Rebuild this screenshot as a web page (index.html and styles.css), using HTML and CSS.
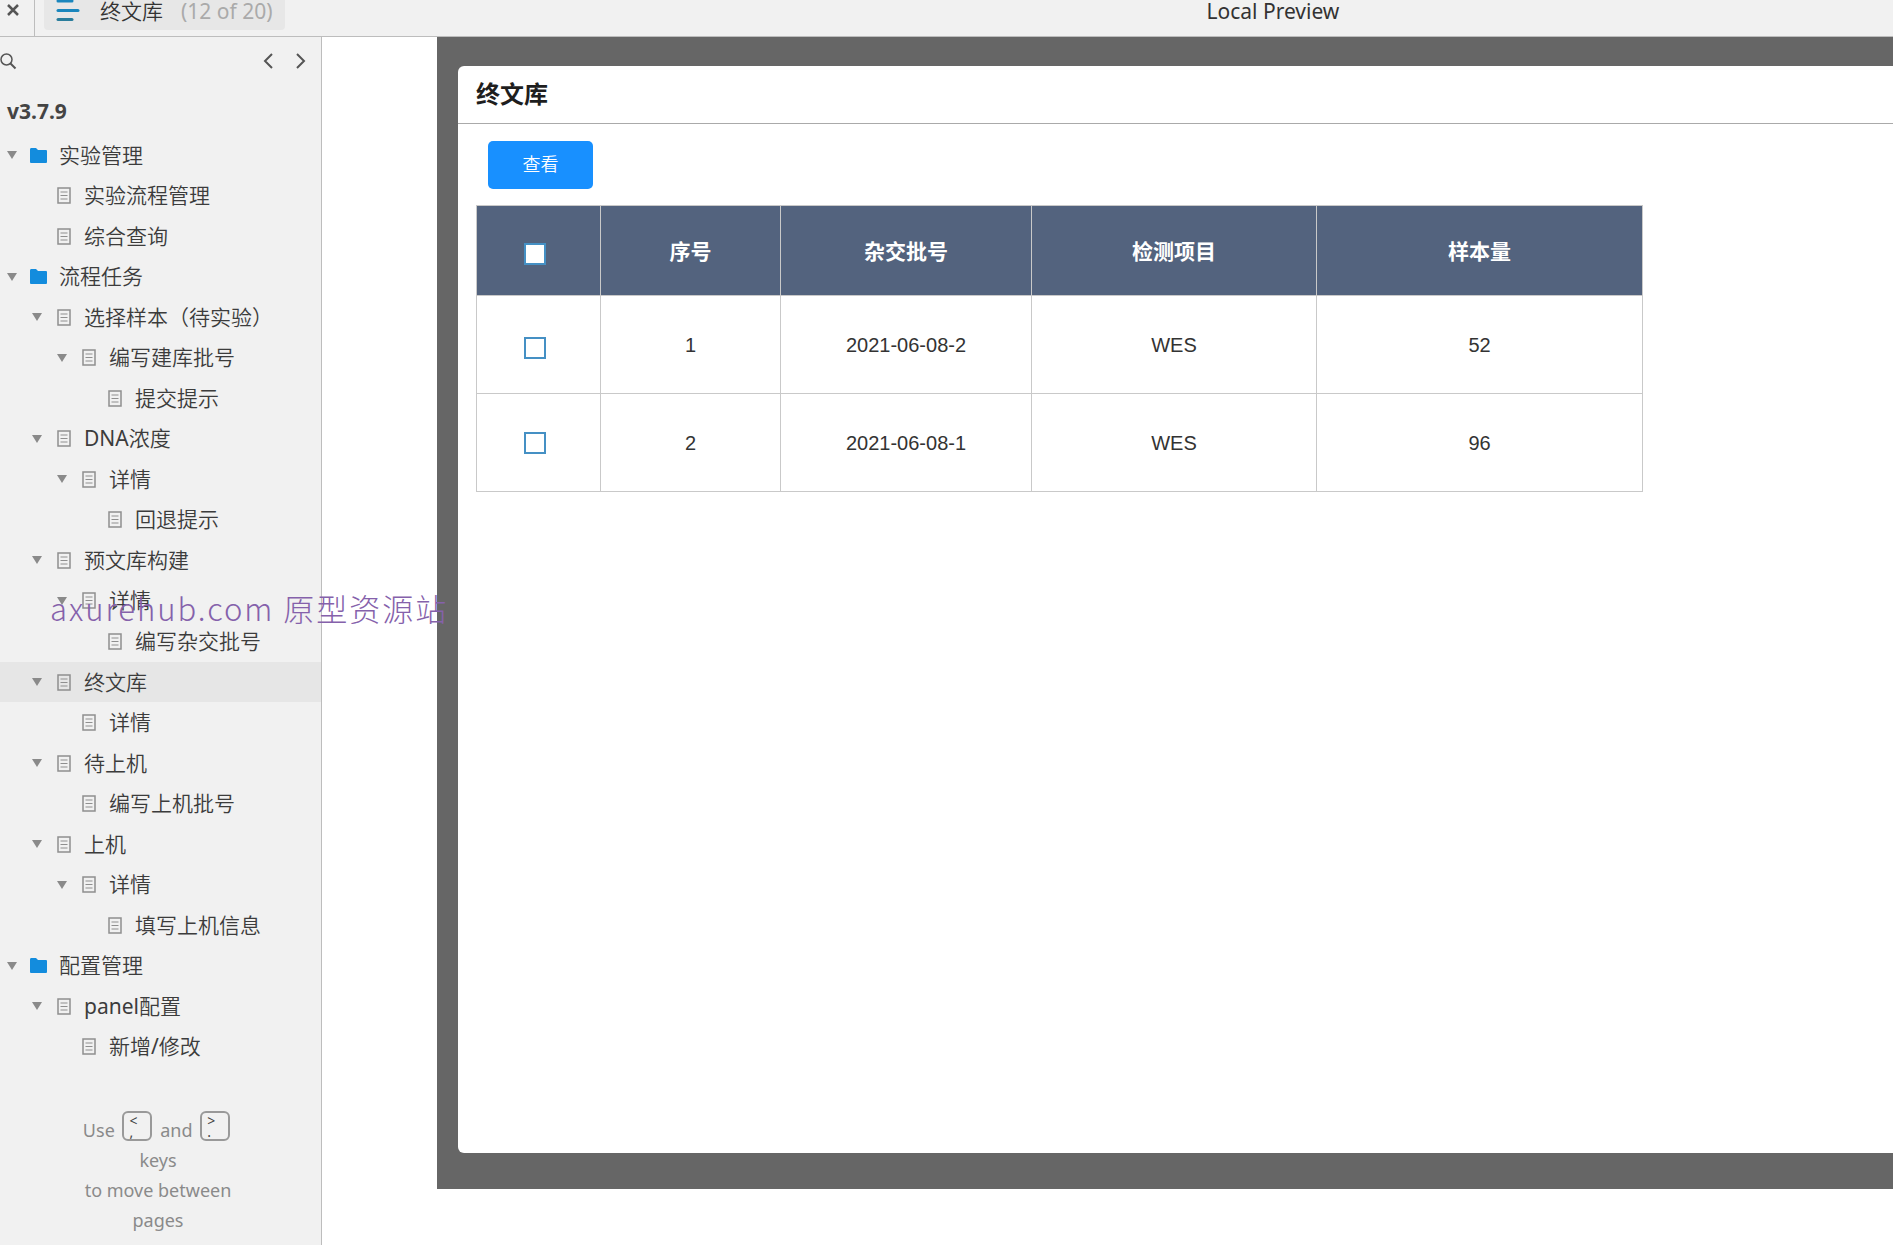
FILE: index.html
```html
<!DOCTYPE html>
<html lang="zh-CN">
<head>
<meta charset="utf-8">
<meta name="viewport" content="width=device-width, initial-scale=1">
<title>终文库</title>
<link rel="stylesheet" href="styles.css">
</head>
<body>
<svg width="0" height="0" class="sprite" aria-hidden="true">
  <symbol id="page" viewBox="0 0 14 17"><path d="M1 1h12v15H1z" fill="none" stroke="#8f8f8f" stroke-width="1.5"/><path d="M3.5 5h7M3.5 8.500h7M3.500 12h7" stroke="#8f8f8f" stroke-width="1.200"/></symbol>
  <symbol id="folder" viewBox="0 0 17 15"><path d="M0 1.500Q0 0 1 0h5l2 2h8q1 0 1 1v11q0 1-1 1H1q-1 0-1-1z" fill="#138cdd"/></symbol>
  <symbol id="arrow" viewBox="0 0 10 8"><path d="M0 0h10L5 8z" fill="#8a8a8a"/></symbol>
</svg>

<header class="topbar">
  <button class="close" aria-label="关闭"><svg width="12" height="12" viewBox="0 0 12 12"><path d="M1 1l10 10M11 1L1 11" stroke="#555" stroke-width="2.500"/></svg></button>
  <button class="tab">
    <svg width="24" height="22" viewBox="0 0 24 22"><g stroke-width="3" stroke-linecap="round"><path d="M2 1h14" stroke="#1a86bd"/><path d="M2 10.500h20" stroke="#1a86bd"/><path d="M2 19.500h14" stroke="#2a7d9c"/></g></svg>
    <span class="tab-name">终文库</span>
    <span class="tab-count">(12 of 20)</span>
  </button>
  <span class="preview">Local Preview</span>
</header>

<div class="body">
  <aside class="sidebar">
    <div class="tools">
      <button aria-label="搜索"><svg width="17" height="17" viewBox="0 0 17 17"><circle cx="6.500" cy="6.500" r="5.500" fill="none" stroke="#555" stroke-width="1.500"/><path d="M10.500 10.500l5 5" stroke="#555" stroke-width="2"/></svg></button>
      <button class="prev" aria-label="上一页"><svg width="10" height="16" viewBox="0 0 10 16"><path d="M9 1L2 8l7 7" fill="none" stroke="#555" stroke-width="2"/></svg></button>
      <button aria-label="下一页"><svg width="10" height="16" viewBox="0 0 10 16"><path d="M1 1l7 7-7 7" fill="none" stroke="#555" stroke-width="2"/></svg></button>
    </div>
    <h1 class="version">v3.7.9</h1>
    <ul class="tree">
      <li><svg class="arrow"><use href="#arrow"/></svg><svg class="folder"><use href="#folder"/></svg><a href="#">实验管理</a></li>
      <li class="l1 leaf"><svg class="page"><use href="#page"/></svg><a href="#">实验流程管理</a></li>
      <li class="l1 leaf"><svg class="page"><use href="#page"/></svg><a href="#">综合查询</a></li>
      <li><svg class="arrow"><use href="#arrow"/></svg><svg class="folder"><use href="#folder"/></svg><a href="#">流程任务</a></li>
      <li class="l1"><svg class="arrow"><use href="#arrow"/></svg><svg class="page"><use href="#page"/></svg><a href="#">选择样本（待实验）</a></li>
      <li class="l2"><svg class="arrow"><use href="#arrow"/></svg><svg class="page"><use href="#page"/></svg><a href="#">编写建库批号</a></li>
      <li class="l3 leaf"><svg class="page"><use href="#page"/></svg><a href="#">提交提示</a></li>
      <li class="l1"><svg class="arrow"><use href="#arrow"/></svg><svg class="page"><use href="#page"/></svg><a href="#"><span class="latin">DNA</span>浓度</a></li>
      <li class="l2"><svg class="arrow"><use href="#arrow"/></svg><svg class="page"><use href="#page"/></svg><a href="#">详情</a></li>
      <li class="l3 leaf"><svg class="page"><use href="#page"/></svg><a href="#">回退提示</a></li>
      <li class="l1"><svg class="arrow"><use href="#arrow"/></svg><svg class="page"><use href="#page"/></svg><a href="#">预文库构建</a></li>
      <li class="l2"><svg class="arrow"><use href="#arrow"/></svg><svg class="page"><use href="#page"/></svg><a href="#">详情</a></li>
      <li class="l3 leaf"><svg class="page"><use href="#page"/></svg><a href="#">编写杂交批号</a></li>
      <li class="l1 current"><svg class="arrow"><use href="#arrow"/></svg><svg class="page"><use href="#page"/></svg><a href="#">终文库</a></li>
      <li class="l2 leaf"><svg class="page"><use href="#page"/></svg><a href="#">详情</a></li>
      <li class="l1"><svg class="arrow"><use href="#arrow"/></svg><svg class="page"><use href="#page"/></svg><a href="#">待上机</a></li>
      <li class="l2 leaf"><svg class="page"><use href="#page"/></svg><a href="#">编写上机批号</a></li>
      <li class="l1"><svg class="arrow"><use href="#arrow"/></svg><svg class="page"><use href="#page"/></svg><a href="#">上机</a></li>
      <li class="l2"><svg class="arrow"><use href="#arrow"/></svg><svg class="page"><use href="#page"/></svg><a href="#">详情</a></li>
      <li class="l3 leaf"><svg class="page"><use href="#page"/></svg><a href="#">填写上机信息</a></li>
      <li><svg class="arrow"><use href="#arrow"/></svg><svg class="folder"><use href="#folder"/></svg><a href="#">配置管理</a></li>
      <li class="l1"><svg class="arrow"><use href="#arrow"/></svg><svg class="page"><use href="#page"/></svg><a href="#"><span class="latin">panel</span>配置</a></li>
      <li class="l2 leaf"><svg class="page"><use href="#page"/></svg><a href="#">新增<span class="latin">/</span>修改</a></li>
    </ul>
    <p class="hint">Use <kbd><span>&lt;</span><span>,</span></kbd> and <kbd><span>&gt;</span><span>.</span></kbd> keys<br>to move between pages</p>
  </aside>

  <main class="stage">
    <section class="card">
      <h2 class="card-title">终文库</h2>
      <div class="card-body">
        <button class="view">查看</button>
        <table class="batches">
          <colgroup><col class="c-tick"><col class="c-no"><col class="c-batch"><col class="c-item"><col class="c-count"></colgroup>
          <thead>
            <tr><th class="tick low"><input type="checkbox" aria-label="全选"></th><th>序号</th><th>杂交批号</th><th>检测项目</th><th>样本量</th></tr>
          </thead>
          <tbody>
            <tr><td class="tick low"><input type="checkbox" aria-label="选择 1"></td><td>1</td><td>2021-06-08-2</td><td>WES</td><td>52</td></tr>
            <tr><td class="tick"><input type="checkbox" aria-label="选择 2"></td><td>2</td><td>2021-06-08-1</td><td>WES</td><td>96</td></tr>
          </tbody>
        </table>
      </div>
    </section>
  </main>
</div>
<div class="watermark">axurehub.com 原型资源站</div>
</body>
</html>
```
FILE: styles.css
```css
* { box-sizing: border-box; }

body {
  margin: 0;
  min-height: 100vh;
  display: flex;
  flex-direction: column;
  overflow-x: hidden;
  background: #fff;
  color: #444;
  font: 21px/30px "Noto Sans", "Noto Sans CJK SC", sans-serif;
}

button {
  border: 0;
  padding: 0;
  background: none;
  color: inherit;
  font: inherit;
}

svg { display: block; flex: none; }
.sprite { position: absolute; }

/* top bar */
.topbar {
  display: flex;
  align-items: flex-start;
  height: 37px;
  background: #f1f1f1;
  border-bottom: 1px solid #bdbdbd;
}
.close {
  width: 35px;
  height: 36px;
  padding: 4px 0 0 7px;
  display: flex;
  align-items: flex-start;
  border-right: 1px solid #bdbdbd;
}
.tab {
  display: flex;
  align-items: flex-start;
  height: 30px;
  margin-left: 9px;
  padding: 0 12px;
  background: #e7e7e7;
  border-radius: 0 0 4px 4px;
  line-height: 22px;
}
.tab-name { margin-left: 20px; color: #333; font-weight: 350; }
.tab-count { margin-left: 18px; color: #aaa; }
.preview { margin-left: 922px; color: #333; line-height: 22px; white-space: nowrap; }

/* sidebar */
.body { flex: 1; display: flex; }
.sidebar {
  flex: none;
  width: 322px;
  background: #f1f1f1;
  border-right: 1px solid #bdbdbd;
}
.tools {
  display: flex;
  align-items: center;
  height: 48px;
  gap: 23px;
  padding-right: 15px;
}
.prev { margin-left: auto; }
.version {
  margin: 0;
  height: 50px;
  padding-left: 7px;
  font-size: 21px;
  line-height: 52px;
  font-weight: 700;
}
.tree {
  list-style: none;
  margin: 0;
  padding: 0;
  height: 932px;
  display: grid;
  grid-auto-rows: 1fr;
}
.tree li { display: flex; align-items: center; padding-left: 7px; }
.tree .l1 { padding-left: 32px; }
.tree .l2 { padding-left: 57px; }
.tree .l3 { padding-left: 83px; }
.tree .current { background: #e6e6e6; }
.tree a {
  padding-bottom: 1px;
  color: #3c3c3c;
  font-weight: 350;
  text-decoration: none;
  white-space: nowrap;
}
.latin { font-weight: 400; }
.arrow { width: 10px; height: 8px; }
.page { width: 14px; height: 17px; margin: 0 13px 0 15px; }
.leaf .page { margin-left: 25px; }
.folder { width: 17px; height: 15px; margin: 0 12px 0 13px; }
.hint {
  width: 166px;
  margin: 44px 0 0 75px;
  color: #8a8a8a;
  font-size: 18px;
  line-height: 30px;
  text-align: center;
}
.hint kbd {
  display: inline-flex;
  flex-direction: column;
  width: 30px;
  height: 30px;
  padding: 2px 0 0 5px;
  margin: 0 3px;
  vertical-align: 11px;
  border: 2px solid #999;
  border-radius: 6px;
  color: #444;
  font: 14px/11px "Noto Sans", sans-serif;
  text-align: left;
}

/* canvas */
.stage {
  flex: 1;
  min-width: 0;
  display: flex;
  margin: 0 0 56px 115px;
  padding: 29px 0 36px 21px;
  background: #666;
}
.card {
  flex: 1;
  min-width: 0;
  background: #fff;
  border-radius: 6px 0 0 6px;
}
.card-title {
  margin: 0;
  padding-left: 18px;
  height: 58px;
  border-bottom: 1px solid #aaa;
  color: #1e1e1e;
  font-size: 24px;
  line-height: 55px;
}
.card-body { padding: 17px 18px; }
.view {
  display: block;
  width: 105px;
  height: 48px;
  margin: 0 0 16px 12px;
  padding-bottom: 2px;
  border-radius: 5px;
  background: #1890ff;
  color: #fff;
  font-size: 18px;
  font-weight: 350;
}
.batches {
  width: 1167px;
  table-layout: fixed;
  border-collapse: collapse;
  color: #333;
  font: 20px/24px "Liberation Sans", "Noto Sans CJK SC", sans-serif;
  text-align: center;
}
.batches th, .batches td { padding: 0; border: 1px solid #c9c9c9; }
.batches th {
  height: 90px;
  padding-top: 2px;
  background: #53637e;
  color: #fff;
  font-size: 21px;
  font-weight: 700;
}
.batches td { height: 98px; }
.batches .tick { padding-right: 8px; }
.batches .low { padding-top: 6px; }
.c-tick { width: 124px; }
.c-no { width: 180px; }
.c-batch { width: 251px; }
.c-item { width: 285px; }
.batches input {
  appearance: none;
  display: block;
  width: 22px;
  height: 22px;
  margin: 0 auto;
  background: #fff;
  border: 2px solid #4590c4;
}

.watermark {
  position: absolute;
  left: 50px;
  top: 585px;
  color: #8561ab;
  font: 300 31px/46px "Noto Sans CJK SC", sans-serif;
  letter-spacing: 2px;
  white-space: nowrap;
  pointer-events: none;
}
```
